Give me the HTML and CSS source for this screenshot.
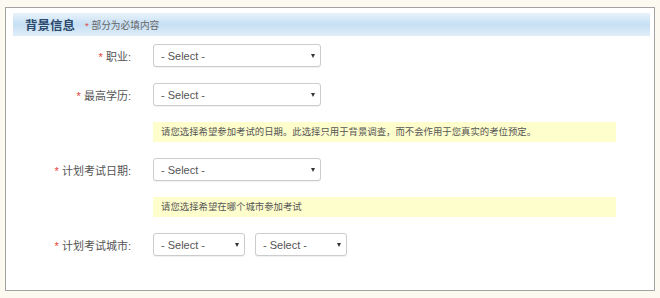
FILE: index.html
```html
<!DOCTYPE html>
<html lang="zh-CN">
<head>
    <meta charset="UTF-8">
    <meta name="viewport" content="width=device-width, initial-scale=1.0">
    <title>背景信息</title>
    <link rel="stylesheet" href="styles.css">
</head>
<body>
    <div class="panel">
        <div class="panel-header">
            <h2>背景信息</h2>
            <span class="hint"><span class="star">*</span> 部分为必填内容</span>
        </div>

        <div class="form">
            <div class="row">
                <label class="label"><span class="star">*</span> 职业:</label>
                <span class="select-wrap">
                    <select><option>- Select -</option></select>
                </span>
            </div>

            <div class="row">
                <label class="label"><span class="star">*</span> 最高学历:</label>
                <span class="select-wrap">
                    <select><option>- Select -</option></select>
                </span>
            </div>

            <div class="row indent">
                <div class="note">请您选择希望参加考试的日期。此选择只用于背景调查，而不会作用于您真实的考位预定。</div>
            </div>

            <div class="row">
                <label class="label"><span class="star">*</span> 计划考试日期:</label>
                <span class="select-wrap">
                    <select><option>- Select -</option></select>
                </span>
            </div>

            <div class="row indent">
                <div class="note">请您选择希望在哪个城市参加考试</div>
            </div>

            <div class="row">
                <label class="label"><span class="star">*</span> 计划考试城市:</label>
                <span class="select-wrap small">
                    <select><option>- Select -</option></select>
                </span>
                <span class="select-wrap small">
                    <select><option>- Select -</option></select>
                </span>
            </div>
        </div>
    </div>
</body>
</html>
```

FILE: styles.css
```css
body {
    margin: 0;
    background-color: #fcf9f1;
    font-family: "Liberation Sans", "Noto Sans CJK SC", sans-serif;
    color: #555;
}
.panel {
    margin: 7px 0 0 5px;
    width: 648px;
    height: 282px;
    border: 1px solid #a3a3a3;
    background-color: #fff;
}
.panel-header {
    display: flex;
    align-items: center;
    margin: 5px 4px 0 7px;
    height: 23px;
    padding-left: 12px;
    background: linear-gradient(#e9f3fb, #c6dff4 50%, #e0eef9);
}
.panel-header h2 {
    margin: 0;
    font-size: 12.5px;
    font-weight: bold;
    color: #2b4a6e;
    font-family: "Noto Sans CJK SC", sans-serif;
}
.hint {
    margin-left: 10px;
    font-size: 9.7px;
    color: #666;
}
.star {
    color: #e8413c;
}
.form {
    display: flex;
    flex-direction: column;
    gap: 16px;
    padding-top: 8px;
}
.row {
    display: flex;
    align-items: center;
    gap: 10px;
}
.row.indent {
    padding-left: 147px;
}
.label {
    width: 125px;
    margin-right: 12px;
    text-align: right;
    font-size: 11px;
    color: #555;
    white-space: nowrap;
}
.select-wrap {
    position: relative;
    display: block;
    width: 168px;
    height: 23px;
}
.select-wrap.small {
    width: 92px;
}
.select-wrap::after {
    content: "";
    position: absolute;
    right: 6px;
    top: 10px;
    border-left: 2.5px solid transparent;
    border-right: 2.5px solid transparent;
    border-top: 4px solid #333;
    pointer-events: none;
}
select {
    appearance: none;
    -webkit-appearance: none;
    width: 100%;
    height: 100%;
    margin: 0;
    padding: 0 16px 0 7px;
    border: 1px solid #ccc;
    border-radius: 3px;
    background-color: #fff;
    box-shadow: 0 1px 1px rgba(0, 0, 0, 0.06);
    font-family: "Liberation Sans", sans-serif;
    font-size: 11px;
    color: #555;
}
.note {
    width: 455px;
    height: 20px;
    line-height: 20px;
    padding-left: 8px;
    background-color: #fefdcc;
    font-size: 9.4px;
    color: #555;
    white-space: nowrap;
}
```
